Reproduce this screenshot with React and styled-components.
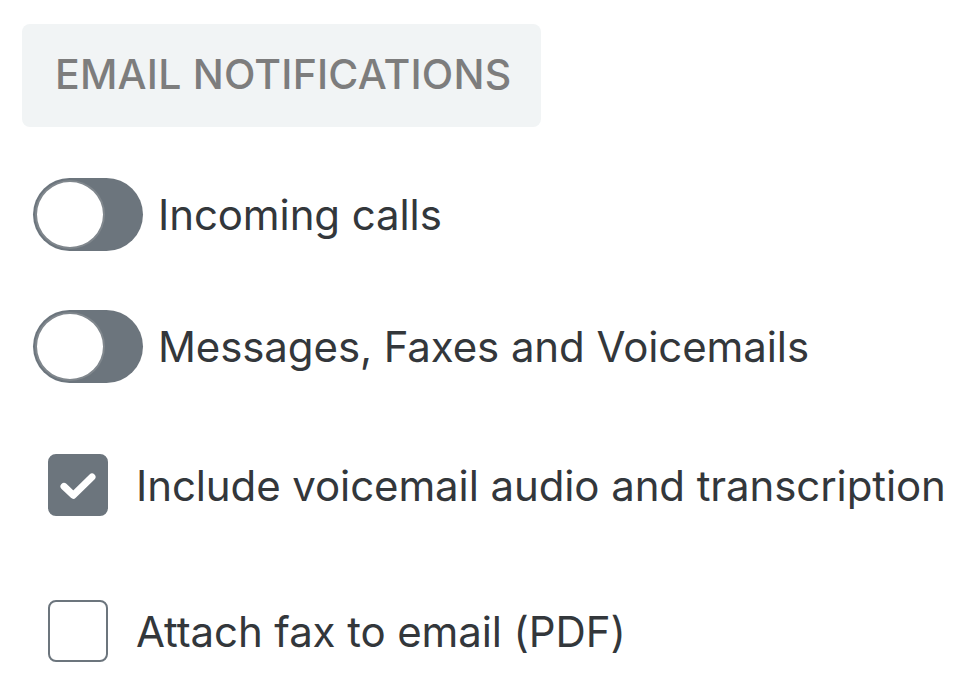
import React, { useState } from "react";
import styled, { createGlobalStyle } from "styled-components";

const Global = createGlobalStyle`
  body {
    margin: 0;
    background: #fff;
    font-family: Inter, "Noto Sans", sans-serif;
  }
`;

const Page = styled.div`
  padding: 24px 0 0 22px;
`;

const Heading = styled.div`
  display: inline-block;
  box-sizing: border-box;
  width: 519px;
  height: 103px;
  padding: 0 33px;
  background: #f1f4f5;
  border-radius: 8px;
  color: #7d7d7d;
  font-size: 41px;
  font-weight: 500;
  letter-spacing: 0.2px;
  line-height: 101px;
  white-space: nowrap;
`;

const Row = styled.label`
  display: flex;
  align-items: center;
  margin-top: ${(p) => p.$top}px;
  margin-left: ${(p) => p.$indent}px;
  cursor: pointer;
`;

const Label = styled.span`
  margin-left: ${(p) => p.$gap}px;
  color: #33373b;
  font-size: 42px;
  letter-spacing: -0.1px;
  white-space: nowrap;
`;

const Track = styled.span`
  position: relative;
  display: block;
  width: 110px;
  height: 73px;
  flex: none;
  border-radius: 37px;
  background: #6c757d;
`;

const Knob = styled.span`
  position: absolute;
  top: 2px;
  left: 2px;
  box-sizing: border-box;
  width: 70px;
  height: 69px;
  border-radius: 50%;
  background: #fff;
  border: 2px solid #80878d;
`;

const Box = styled.span`
  display: flex;
  align-items: center;
  justify-content: center;
  box-sizing: border-box;
  width: 60px;
  height: 62px;
  flex: none;
  border-radius: 8px;
  border: 2px solid #6c757d;
  background: ${(p) => (p.$checked ? "#6c757d" : "#fff")};
`;

const Toggle = ({ label, top }) => (
  <Row $top={top} $indent={11}>
    <Track>
      <Knob />
    </Track>
    <Label $gap={15}>{label}</Label>
  </Row>
);

const Check = ({ label, top, initial }) => {
  const [checked, setChecked] = useState(initial);
  return (
    <Row $top={top} $indent={26} onClick={() => setChecked(!checked)}>
      <Box $checked={checked}>
        {checked && (
          <svg width="60" height="62" viewBox="0 0 60 62">
            <path
              d="M15 32.5 L25 42 L45 22.5"
              fill="none"
              stroke="#fff"
              strokeWidth="7.5"
              strokeLinecap="round"
              strokeLinejoin="round"
            />
          </svg>
        )}
      </Box>
      <Label $gap={28}>{label}</Label>
    </Row>
  );
};

export default function App() {
  return (
    <Page>
      <Global />
      <Heading>EMAIL NOTIFICATIONS</Heading>
      <Toggle top={51} label="Incoming calls" />
      <Toggle top={59} label="Messages, Faxes and Voicemails" />
      <Check top={71} initial={true} label="Include voicemail audio and transcription" />
      <Check top={84} initial={false} label="Attach fax to email (PDF)" />
    </Page>
  );
}
